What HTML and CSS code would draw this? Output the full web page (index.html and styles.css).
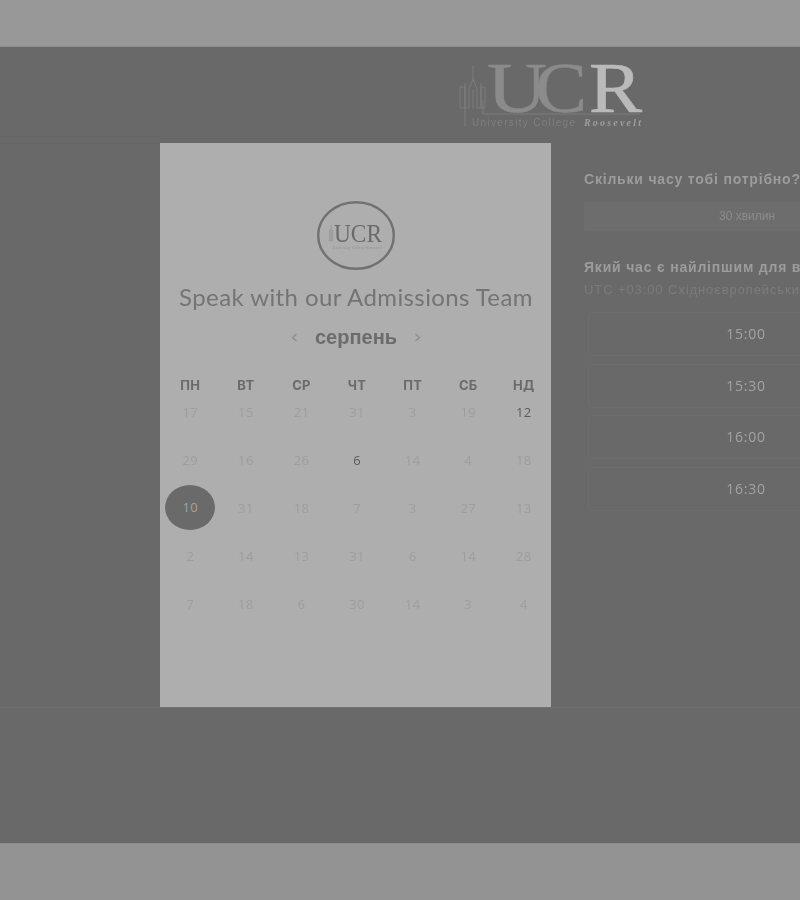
FILE: index.html
```html
<!DOCTYPE html>
<html lang="uk">
<head>
<meta charset="utf-8">
<title>UCR</title>
<link rel="stylesheet" href="styles.css">
</head>
<body>
<div class="band band-top"></div>
<main class="main">
  <header class="header">
    <svg class="brand" width="190" height="70" viewBox="0 0 190 70">
      <g fill="none" stroke="#7d7d7d" stroke-width="1">
        <path d="M15 3V17M11 27L15 17L19 27V46M11 27V46M7 21V46H11M23 21V46H19M2 25H7V46H2ZM23 25H27V46H23ZM15 27V46M7 46V65"/>
        <path d="M25 38V52H182"/>
      </g>
      <text class="brand-uc" x="29" y="50" textLength="60" lengthAdjust="spacingAndGlyphs">U</text>
      <text class="brand-uc" x="77" y="50" textLength="52" lengthAdjust="spacingAndGlyphs">C</text>
      <text class="brand-r" x="131" y="50" textLength="53" lengthAdjust="spacingAndGlyphs">R</text>
      <text class="brand-sub" x="14" y="64" textLength="103">University College</text>
      <text class="brand-sub-em" x="126" y="64" textLength="57">Roosevelt</text>
    </svg>
  </header>
  <div class="content">
    <div class="left-strip"></div>
    <section class="card">
      <svg class="card-logo" width="78" height="69" viewBox="0 0 78 69">
        <ellipse cx="39" cy="34.500" rx="37.800" ry="33.300" fill="none" stroke="#717171" stroke-width="2.400"/>
        <path d="M12.500 40V29H15.500V40ZM14 29V24" fill="#a0a0a0" stroke="#979797" stroke-width="0.800"/>
        <text class="card-logo-uc" x="17" y="41" textLength="48" lengthAdjust="spacingAndGlyphs">UCR</text>
        <text class="card-logo-sub" x="16" y="48" textLength="49">University College Roosevelt</text>
      </svg>
      <h1 class="title">Speak with our Admissions Team</h1>
      <div class="month">
        <svg class="chev" width="7" height="9" viewBox="0 0 7 9"><path d="M5.500 1L1.500 4.500L5.500 8"/></svg>
        <span class="month-name">серпень</span>
        <svg class="chev" width="7" height="9" viewBox="0 0 7 9"><path d="M1.500 1L5.500 4.500L1.500 8"/></svg>
      </div>
      <div class="weekdays">
        <span>ПН</span><span>ВТ</span><span>СР</span><span>ЧТ</span><span>ПТ</span><span>СБ</span><span>НД</span>
      </div>
      <div class="days">
        <span>17</span><span>15</span><span>21</span><span>31</span><span>3</span><span>19</span><span class="on">12</span>
        <span>29</span><span>16</span><span>26</span><span class="on">6</span><span>14</span><span>4</span><span>18</span>
        <span class="picked"><b>10</b></span><span>31</span><span>18</span><span>7</span><span>3</span><span>27</span><span>13</span>
        <span>2</span><span>14</span><span>13</span><span>31</span><span>6</span><span>14</span><span>28</span>
        <span>7</span><span>18</span><span>6</span><span>30</span><span>14</span><span>3</span><span>4</span>
      </div>
    </section>
    <section class="side">
      <h2 class="side-h side-h-first">Скільки часу тобі потрібно?</h2>
      <div class="duration">30 хвилин</div>
      <h2 class="side-h side-h-second">Який час є найліпшим для вас?</h2>
      <p class="zone">UTC +03:00 Східноєвропейський час</p>
      <ul class="slots">
        <li>15:00</li>
        <li>15:30</li>
        <li>16:00</li>
        <li>16:30</li>
      </ul>
    </section>
  </div>
</main>
<div class="band band-bottom"></div>
</body>
</html>
```

FILE: styles.css
```css
* { box-sizing: border-box; }
html, body { margin: 0; height: 900px; overflow: hidden; }
body {
  display: flex;
  flex-direction: column;
  background: #696969;
  font-family: "Liberation Sans", Arial, sans-serif;
}
.band { background: #989898; flex: none; }
.band-top { height: 47px; border-bottom: 1px solid #8c8c8c; }
.band-bottom { height: 57px; background: #939393; border-top: 1px solid #8a8a8a; }
.main { flex: 1; min-height: 0; display: flex; flex-direction: column; overflow: hidden; background: #696969; }
.header { height: 96px; flex: none; padding: 15px 0 0 458px; }
.brand { display: block; overflow: visible; filter: blur(0.7px); }
.brand-uc { font: 72px "Liberation Serif", serif; fill: #8b8b8b; stroke: #8b8b8b; stroke-width: 0.500; }
.brand-r { font: 72px "Liberation Serif", serif; fill: #bababa; stroke: #bababa; stroke-width: 0.700; }
.brand-sub { font: 10px "Liberation Sans", sans-serif; fill: #7f7f7f; }
.brand-sub-em { font: italic 700 10px "Liberation Serif", serif; fill: #9e9e9e; }
.content {
  display: flex;
  height: 564px;
  flex: none;
  box-shadow: 0 1px 0 #6f6f6f;
}
.left-strip { width: 160px; flex: none; border-top: 1px solid #646464; margin-top: -7px; height: 8px; border-bottom: 1px solid #646464; }
.card {
  width: 391px;
  flex: none;
  background: #aeaeae;
  padding: 58px 0 0 1px;
  display: flex;
  flex-direction: column;
  align-items: center;
}
.card-logo { display: block; filter: blur(0.5px); }
.card-logo-uc { font: 25px "Liberation Serif", serif; fill: #6a6a6a; }
.card-logo-sub { font: 3px "Liberation Serif", serif; fill: #8c8c8c; }
.title {
  margin: 12px 0 0;
  font: 400 24px/30px Lato, sans-serif;
  letter-spacing: 0.4px;
  color: #747474;
  white-space: nowrap;
  filter: blur(0.6px);
}
.month {
  display: flex;
  align-items: center;
  gap: 17px;
  height: 30px;
  margin-top: 10px;
  filter: blur(0.5px);
}
.month-name { font: 700 20px/30px "Liberation Sans", sans-serif; color: #6c6c6c; }
.chev { fill: none; stroke: #8c8c8c; stroke-width: 1.300; }
.weekdays, .days {
  display: grid;
  grid-template-columns: repeat(7, 55.600px);
  width: 389px;
  margin-left: 2px;
  justify-items: center;
  align-items: center;
}
.weekdays {
  margin-top: 23px;
  height: 20px;
  font: 700 13px/20px Inter, sans-serif;
  letter-spacing: 0.3px;
  color: #6a6a6a;
  filter: blur(0.5px);
}
.days {
  grid-auto-rows: 48px;
  margin-top: -2px;
  font: 400 13px/48px "Open Sans", sans-serif;
  letter-spacing: 0.4px;
  color: #9d9d9d;
  filter: blur(0.6px);
}
.days span { transform: translateY(-5px); }
.days .on { color: #5c5c5c; }
.days .picked {
  width: 50px;
  height: 45px;
  border-radius: 50%;
  background: #6a6a6a;
  display: flex;
  align-items: center;
  justify-content: center;
  color: #a2a2a2;
  transform: translateY(-6px);
}
.days .picked b { font-weight: 400; line-height: 1; }
.side { flex: none; width: 326px; margin-left: 33px; padding-top: 27px; filter: blur(0.6px); }
.side-h {
  margin: 0;
  font: 700 14px/18px "Liberation Sans", sans-serif;
  letter-spacing: 0.8px;
  color: #9c9c9c;
  white-space: nowrap;
}
.duration {
  height: 29px;
  margin-top: 14px;
  background: #6d6d6d;
  border-radius: 2px;
  text-align: center;
  font: 12px/29px "Liberation Sans", sans-serif;
  color: #8c8c8c;
}
.side-h-second { margin-top: 27px; }
.zone {
  margin: 5px 0 0;
  font: 13px/18px "Liberation Sans", sans-serif;
  letter-spacing: 0.9px;
  color: #7c7c7c;
  white-space: nowrap;
}
.slots { list-style: none; margin: 13px 0 0 4px; padding: 0; width: 316px; display: flex; flex-direction: column; gap: 7.500px; }
.slots li {
  height: 44px;
  border: 1px solid #6d6d6d;
  border-radius: 3px;
  text-align: center;
  font: 14px/41px "Open Sans", sans-serif;
  letter-spacing: 0.8px;
  color: #a3a3a3;
}
```
